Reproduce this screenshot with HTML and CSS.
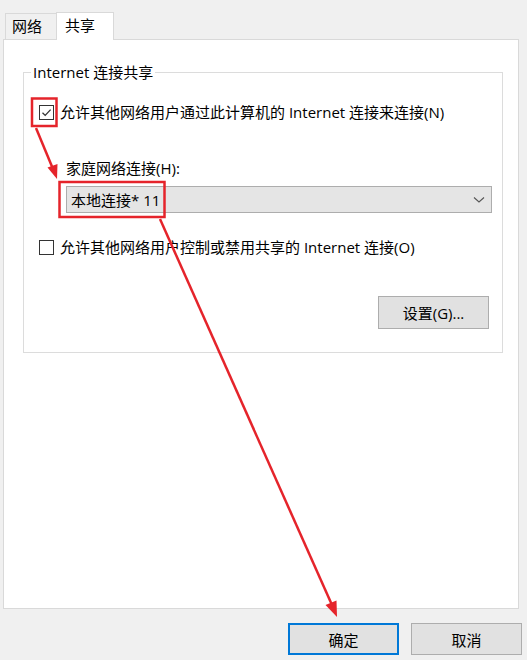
FILE: index.html
```html
<!DOCTYPE html>
<html lang="zh-CN">
<head>
<meta charset="utf-8">
<title>Internet 连接共享</title>
<link rel="stylesheet" href="styles.css">
</head>
<body>
<div class="dialog">
  <div class="tabs">
    <div class="tab">网络</div>
    <div class="tab active">共享</div>
  </div>
  <div class="panel">
    <fieldset class="group">
      <legend>Internet 连接共享</legend>
      <label class="check-row">
        <span class="box checked">
          <svg width="13" height="13" viewBox="0 0 13 13"><path d="M2.5 6.8 L5.2 9.4 L10.6 3.6" fill="none" stroke="#333" stroke-width="1.3"/></svg>
        </span>
        <span>允许其他网络用户通过此计算机的 Internet 连接来连接(N)</span>
      </label>
      <div class="home">
        <div class="home-label">家庭网络连接(H):</div>
        <div class="select">
          <span>本地连接* 11</span>
          <svg width="12" height="8" viewBox="0 0 12 8"><path d="M1 1.5 L6 6 L11 1.5" fill="none" stroke="#555" stroke-width="1.1"/></svg>
        </div>
      </div>
      <label class="check-row second">
        <span class="box"></span>
        <span>允许其他网络用户控制或禁用共享的 Internet 连接(O)</span>
      </label>
      <div class="settings-row">
        <button class="btn settings">设置(G)...</button>
      </div>
    </fieldset>
  </div>
  <div class="footer">
    <button class="btn ok">确定</button>
    <button class="btn cancel">取消</button>
  </div>
</div>
<svg class="annot" width="527" height="660" viewBox="0 0 527 660">
  <rect x="32" y="98.5" width="24.5" height="27.5" fill="none" stroke="#e5242b" stroke-width="2.5"/>
  <rect x="59.5" y="182" width="105" height="35" fill="none" stroke="#e5242b" stroke-width="2.5"/>
  <line x1="36" y1="128" x2="53" y2="169" stroke="#e5242b" stroke-width="2.5"/>
  <polygon points="57,179 47.5,167.5 57.5,164" fill="#e5242b"/>
  <line x1="160" y1="219" x2="332" y2="605" stroke="#e5242b" stroke-width="2.5"/>
  <polygon points="337,617 325.5,605 336.5,600.5" fill="#e5242b"/>
</svg>
</body>
</html>
```
FILE: styles.css
```css
html, body {
  margin: 0;
  padding: 0;
}
body {
  width: 527px;
  height: 660px;
  background: #f0f0f0;
  font-family: "Open Sans", "Noto Sans CJK SC", sans-serif;
  font-size: 15px;
  color: #000;
  position: relative;
  overflow: hidden;
}
.dialog {
  padding: 12px 8px 0 3px;
}
.tabs {
  display: flex;
  align-items: flex-end;
  padding-left: 2px;
  height: 27px;
  position: relative;
  z-index: 1;
}
.tab {
  box-sizing: border-box;
  height: 26px;
  width: 52px;
  border: 1px solid #d9d9d9;
  border-bottom: none;
  background: #f0f0f0;
  padding-left: 6px;
  line-height: 24px;
}
.tab.active {
  background: #fff;
  height: 28px;
  width: 58px;
  padding-left: 8px;
  margin-bottom: -1px;
  margin-left: -1px;
}
.panel {
  box-sizing: border-box;
  width: 516px;
  height: 570px;
  background: #fff;
  border: 1px solid #d9d9d9;
  padding: 22px 15px 0 19px;
}
.group {
  margin: 0;
  border: 1px solid #dcdcdc;
  padding: 0 10px 0 15px;
  height: 291px;
  box-sizing: border-box;
}
.group legend {
  padding: 0 2px;
  margin-left: -8px;
  line-height: 20px;
}
.check-row {
  display: flex;
  align-items: center;
  gap: 6px;
  line-height: 20px;
}
.check-row:first-of-type {
  margin-top: 20px;
}
.box {
  box-sizing: border-box;
  width: 15px;
  height: 15px;
  border: 1px solid #333;
  background: #fff;
  display: flex;
  align-items: center;
  justify-content: center;
  flex: none;
}
.home {
  padding-left: 27px;
  margin-top: 36px;
}
.home-label {
  line-height: 20px;
}
.select {
  box-sizing: border-box;
  margin-top: 8px;
  height: 27px;
  background: #e5e5e5;
  border: 1px solid #adadad;
  display: flex;
  align-items: center;
  justify-content: space-between;
  padding: 0 6px 0 4px;
}
.check-row.second {
  margin-top: 24px;
}
.settings-row {
  display: flex;
  justify-content: flex-end;
  margin-top: 39px;
}
.btn {
  box-sizing: border-box;
  font: inherit;
  color: #000;
  background: #e1e1e1;
  border: 1px solid #adadad;
  padding: 0;
  margin: 0;
}
.settings {
  width: 111px;
  height: 33px;
  margin-right: 3px;
}
.footer {
  display: flex;
  justify-content: flex-end;
  gap: 12px;
  margin-top: 14px;
  margin-right: -3px;
}
.ok, .cancel {
  width: 111px;
  height: 32px;
}
.ok {
  border: 2px solid #0078d7;
}
.annot {
  position: absolute;
  left: 0;
  top: 0;
  pointer-events: none;
}
```
